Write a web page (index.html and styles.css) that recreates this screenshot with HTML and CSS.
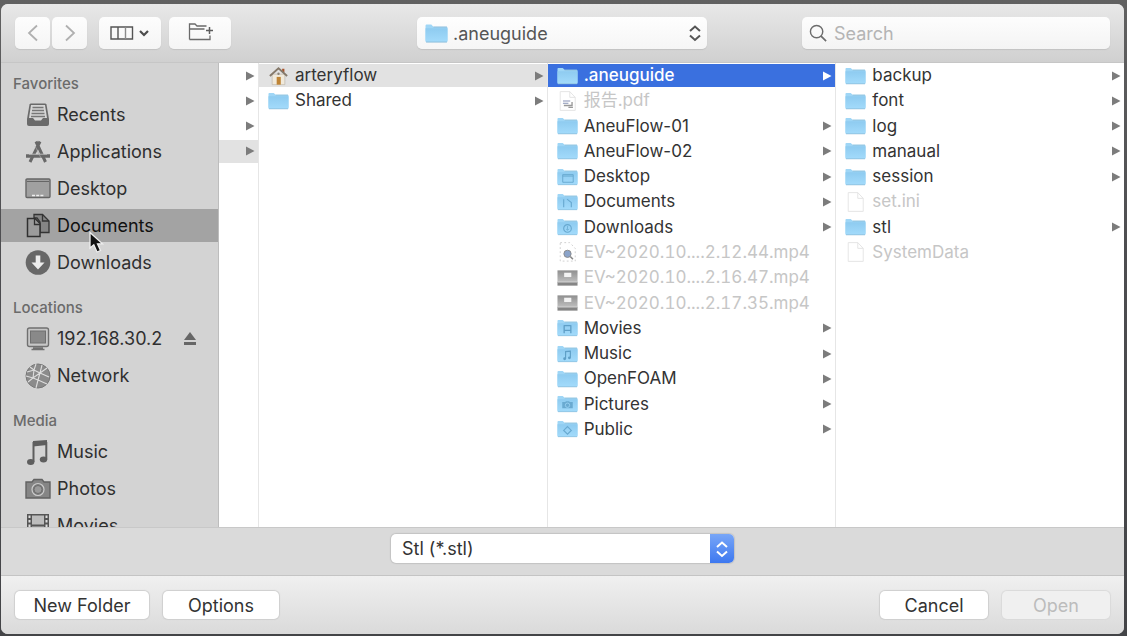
FILE: index.html
```html
<!DOCTYPE html>
<html lang="en">
<head>
<meta charset="utf-8">
<title>Open</title>
<link rel="stylesheet" href="styles.css">
</head>
<body>
<svg class="defs" aria-hidden="true">
  <defs>
    <linearGradient id="blue" x1="0" y1="0" x2="0" y2="1"><stop offset="0" stop-color="#8ecbf0"/><stop offset="1" stop-color="#a3dbfb"/></linearGradient>
    <linearGradient id="steel" x1="0" y1="0" x2="0" y2="1"><stop offset="0" stop-color="#8f8f8f"/><stop offset="1" stop-color="#bdbdbd"/></linearGradient>
    <symbol id="folder" viewBox="0 0 22 18">
      <path d="M0.500 1.500Q0.500 0.500 1.500 0.500H6L8 2.500H20.500Q21.500 2.500 21.500 3.500V16H0.500Z" fill="#9fd6f6"/>
      <path d="M0.500 4H21.500V16.500Q21.500 17.300 20.500 17.300H1.500Q0.500 17.300 0.500 16.500Z" fill="url(#blue)"/>
      <path d="M8 2.800H21M1 17.200H21" stroke="#86b5d2" stroke-width=".7"/>
    </symbol>
    <symbol id="arrow" viewBox="0 0 10 10"><path d="M1 .5L9.500 5L1 9.500Z" fill="currentColor"/></symbol>
    <symbol id="page" viewBox="0 0 22 22"><path d="M3 .7H13.500L19.500 7V21.300H3ZM13.500 .7V7H19.500" fill="#fff" stroke="#e2e2e2" stroke-width="1"/></symbol>
    <symbol id="drive" viewBox="0 0 22 18"><rect x=".5" y="1" width="21" height="12" fill="url(#steel)"/><rect x=".5" y="13" width="21" height="4" fill="#858585"/><path d="M1 13.200H21" stroke="#d5d5d5"/><rect x="7.500" y="3.500" width="7.500" height="4.500" fill="#f3f3f3"/></symbol>
    <symbol id="updown" viewBox="0 0 14 18"><path d="M2 7L7 2.500L12 7M2 11.500L7 16L12 11.500" fill="none" stroke="currentColor" stroke-width="2"/></symbol>
  </defs>
</svg>
<main class="window">
  <header class="toolbar">
    <div class="history">
      <button class="tool nav" aria-label="Back"><svg width="12" height="18" viewBox="0 0 12 18"><path d="M10 1.500L2 9L10 16.500" fill="none" stroke="#b0b0b0" stroke-width="1.800"/></svg></button>
      <button class="tool nav" aria-label="Forward"><svg width="12" height="18" viewBox="0 0 12 18"><path d="M2 1.500L10 9L2 16.500" fill="none" stroke="#b0b0b0" stroke-width="1.800"/></svg></button>
    </div>
    <button class="tool wide" aria-label="View as columns">
      <svg width="40" height="16" viewBox="0 0 40 16"><path d="M1 2H22.500V14H1ZM8 2V14" fill="none" stroke="#555" stroke-width="1.400"/><path d="M15.500 2V14" stroke="#8a8a8a" stroke-width="1.400"/><path d="M30 6L34 10L38 6" fill="none" stroke="#4c4c4c" stroke-width="2.200"/></svg>
    </button>
    <button class="tool wide" aria-label="New group">
      <svg width="26" height="20" viewBox="0 0 26 20"><path d="M2.500 16.500V1H8L10 3H19.500M2.500 6H17.500M2.500 16.500H23V12.500" fill="none" stroke="#6a6a6a" stroke-width="1.300"/><path d="M22.500 4V11M19 7.500H26" stroke="#5c5c5c" stroke-width="1.500"/></svg>
    </button>
    <div class="place">
      <svg class="place-icon" width="23" height="19"><use href="#folder"/></svg>
      <select class="place-select" aria-label="Location"><option>.aneuguide</option></select>
      <svg class="place-arrows" width="14" height="18"><use href="#updown"/></svg>
    </div>
    <div class="search">
      <svg width="19" height="19" viewBox="0 0 20 20"><circle cx="8" cy="8" r="6.500" fill="none" stroke="#6c6c6c" stroke-width="1.500"/><path d="M12.700 12.700L18 18" stroke="#6c6c6c" stroke-width="1.800"/></svg>
      <input class="search-input" type="search" placeholder="Search" aria-label="Search">
    </div>
  </header>

  <div class="browser">
    <nav class="sidebar">
      <h2 class="side-title">Favorites</h2>
      <div class="side-list">
        <a class="side-item" href="#recents"><svg width="26" height="26" viewBox="0 0 26 26"><path d="M4.500 2.500Q5 1.500 6 1.500H20Q21 1.500 21.500 2.500L24 17V22Q24 24 22 24H4Q2 24 2 22V17Z" fill="#6a6a6a"/><path d="M6 3H20L22 16H18L16 18.500H10L8 16H4Z" fill="#d6d6d6"/><path d="M7.500 5.500H18.500M7 8.500H19M6.500 11.500H19.500M6 14.500H20" stroke="#777" stroke-width="1.300"/></svg>Recents</a>
        <a class="side-item" href="#applications"><svg width="26" height="26" viewBox="0 0 26 26"><path d="M11 2.500L20.500 23M15 2.500L5 23" stroke="#686868" stroke-width="3"/><path d="M1 17H25" stroke="#686868" stroke-width="3.500"/><path d="M4 15.200H22" stroke="#ccc" stroke-width=".8"/><path d="M10 7L16 19" stroke="#aaa" stroke-width=".7"/></svg>Applications</a>
        <a class="side-item" href="#desktop"><svg width="26" height="26" viewBox="0 0 26 26"><rect x="1" y="3" width="24" height="18.500" rx="1" fill="#a0a0a0" stroke="#666" stroke-width="1.400"/><path d="M2 5.500H24" stroke="#666"/><path d="M7 19.500H19" stroke="#eee" stroke-width="1.500" stroke-dasharray="3 1.200"/></svg>Desktop</a>
        <a class="side-item selected" href="#documents"><svg width="26" height="26" viewBox="0 0 26 26"><path d="M9 1.500H17.500L24 8V19.500H15V9L12 5H9Z" fill="#858585" stroke="#343434" stroke-width="1.300"/><path d="M17.500 1.500V8H24" fill="none" stroke="#343434" stroke-width="1.300"/><path d="M2.500 5.500H10L15 10.500V23.500H2.500Z" fill="#9b9b9b" stroke="#303030" stroke-width="1.500"/><path d="M9.500 5.500V11.500H15" fill="none" stroke="#303030" stroke-width="1.300"/></svg>Documents</a>
        <a class="side-item" href="#downloads"><svg width="26" height="26" viewBox="0 0 26 26"><circle cx="13" cy="12.500" r="12.300" fill="#686868"/><path d="M10.700 5.500H15.300V12.500H19.500L13 19.500L6.500 12.500H10.700Z" fill="#ededed"/></svg>Downloads</a>
      </div>
      <h2 class="side-title">Locations</h2>
      <div class="side-list">
        <a class="side-item" href="#server"><svg width="26" height="26" viewBox="0 0 26 26"><rect x="2.500" y="2" width="21" height="18.500" rx="2" fill="#c7c7c7" stroke="#707070" stroke-width="1.400"/><rect x="5.500" y="5" width="15" height="12" fill="#898989" stroke="#707070"/><path d="M8 22H18M6.500 23.500H19.500" stroke="#707070" stroke-width="1.500"/></svg>192.168.30.2<svg class="eject" width="12" height="14" viewBox="0 0 12 14"><path d="M6 0L12 8H0Z" fill="#666"/><path d="M0 11.500H12" stroke="#666" stroke-width="3"/></svg></a>
        <a class="side-item" href="#network"><svg width="26" height="26" viewBox="0 0 26 26"><circle cx="13" cy="13" r="12" fill="#8b8b8b" stroke="#777"/><path d="M2 9L9 7L15 10L22 5M5 4L9 7L8 15L3 19M15 10L13 17L22 21M15 10L24 14M8 15L13 17L11 25M11 1L9 7M17 2L15 10M1 13L8 15L15 10" fill="none" stroke="#dedede" stroke-width="1.100"/></svg>Network</a>
      </div>
      <h2 class="side-title">Media</h2>
      <div class="side-list">
        <a class="side-item" href="#music"><svg width="26" height="26" viewBox="0 0 26 26"><path d="M8 2L22 1V6L8 7.500Z" fill="#5e5e5e"/><path d="M8.500 3V23M21.300 3V20.500" stroke="#5e5e5e" stroke-width="2"/><ellipse cx="5.700" cy="23" rx="3.700" ry="2.900" fill="#5e5e5e"/><ellipse cx="18.500" cy="20.500" rx="3.700" ry="2.900" fill="#5e5e5e"/></svg>Music</a>
        <a class="side-item" href="#photos"><svg width="26" height="26" viewBox="0 0 26 26"><path d="M1 6H7L9 3.500H17L19 6H25V22H1Z" fill="#858585" stroke="#626262" stroke-width="1.400"/><circle cx="13" cy="13.500" r="6" fill="#7a7a7a" stroke="#ccc" stroke-width="1.200"/><circle cx="13" cy="13.500" r="4" fill="#999" stroke="#666" stroke-width=".8"/></svg>Photos</a>
        <a class="side-item" href="#movies"><svg width="26" height="26" viewBox="0 0 26 26"><rect x="2" y="1" width="22" height="23" fill="#555"/><rect x="7" y="2.500" width="12" height="9" fill="#bcbcbc"/><rect x="7" y="13.500" width="12" height="9" fill="#bcbcbc"/><path d="M4.500 2.500V23M21.500 2.500V23" stroke="#ddd" stroke-width="2" stroke-dasharray="2.500 2"/></svg>Movies</a>
      </div>
    </nav>

    <ul class="column narrow">
      <li><button class="row" aria-label="Folder 1"><svg class="arrow"><use href="#arrow"/></svg></button></li>
      <li><button class="row" aria-label="Folder 2"><svg class="arrow"><use href="#arrow"/></svg></button></li>
      <li><button class="row" aria-label="Folder 3"><svg class="arrow"><use href="#arrow"/></svg></button></li>
      <li><button class="row open" aria-label="Folder 4"><svg class="arrow"><use href="#arrow"/></svg></button></li>
    </ul>
    <ul class="column">
      <li><button class="row open"><svg class="icon" viewBox="0 0 22 22"><path d="M4 9H18V20.500H4Z" fill="#f1eadb" stroke="#b9b2a6" stroke-width=".7"/><path d="M15 3H17.500V7H15Z" fill="#a7542c"/><path d="M1.500 11L11 2.500L20.500 11" fill="none" stroke="#85796a" stroke-width="2"/><rect x="9" y="12" width="4.500" height="8.500" fill="#bf8435"/><circle cx="11" cy="8.500" r="1.300" fill="#8b8377"/></svg>arteryflow<svg class="arrow"><use href="#arrow"/></svg></button></li>
      <li><button class="row"><svg class="icon"><use href="#folder"/></svg>Shared<svg class="arrow"><use href="#arrow"/></svg></button></li>
    </ul>
    <ul class="column">
      <li><button class="row active"><svg class="icon"><use href="#folder"/></svg>.aneuguide<svg class="arrow"><use href="#arrow"/></svg></button></li>
      <li><button class="row" disabled><svg class="icon" viewBox="0 0 22 22"><use href="#page"/><path d="M6 11H14M6 13.500H12" stroke="#8792b5" stroke-width="1.300"/><path d="M7 16H16V12M12 18H17" fill="none" stroke="#999" stroke-width="1.500"/></svg>报告.pdf</button></li>
      <li><button class="row"><svg class="icon"><use href="#folder"/></svg>AneuFlow-01<svg class="arrow"><use href="#arrow"/></svg></button></li>
      <li><button class="row"><svg class="icon"><use href="#folder"/></svg>AneuFlow-02<svg class="arrow"><use href="#arrow"/></svg></button></li>
      <li><button class="row"><svg class="icon" viewBox="0 0 22 18"><use href="#folder"/><path d="M6 6.500H17V14.500H6ZM6 8H17" fill="none" stroke="#68a9d0"/></svg>Desktop<svg class="arrow"><use href="#arrow"/></svg></button></li>
      <li><button class="row"><svg class="icon" viewBox="0 0 22 18"><use href="#folder"/><path d="M7 6V14.500M10.500 6L15 9.500V14.500" fill="none" stroke="#68a9d0" stroke-width="1.200"/></svg>Documents<svg class="arrow"><use href="#arrow"/></svg></button></li>
      <li><button class="row"><svg class="icon" viewBox="0 0 22 18"><use href="#folder"/><circle cx="11" cy="10.500" r="4" fill="none" stroke="#68a9d0" stroke-width="1.200"/><path d="M11 8V12M9.500 11L11 12.500L12.500 11" fill="none" stroke="#68a9d0" stroke-width=".8"/></svg>Downloads<svg class="arrow"><use href="#arrow"/></svg></button></li>
      <li><button class="row dated" disabled><svg class="icon" viewBox="0 0 22 22"><path d="M3 .7H13.500L19.500 7V21H3Z" fill="#fff" stroke="#ccc" stroke-dasharray="2 2.500"/><circle cx="11" cy="13" r="4" fill="#8ba4ca" stroke="#888"/><path d="M14 16L17 19" stroke="#888" stroke-width="1.800"/></svg>EV~2020.10....2.12.44.mp4</button></li>
      <li><button class="row dated" disabled><svg class="icon"><use href="#drive"/></svg>EV~2020.10....2.16.47.mp4</button></li>
      <li><button class="row dated" disabled><svg class="icon"><use href="#drive"/></svg>EV~2020.10....2.17.35.mp4</button></li>
      <li><button class="row"><svg class="icon" viewBox="0 0 22 18"><use href="#folder"/><path d="M7.500 6V14.500M14.500 6V14.500M7.500 6.500H14.500M7.500 11.500H14.500" fill="none" stroke="#5f9fc7" stroke-width="1.400"/></svg>Movies<svg class="arrow"><use href="#arrow"/></svg></button></li>
      <li><button class="row"><svg class="icon" viewBox="0 0 22 18"><use href="#folder"/><path d="M9 14V6.500L14 6V13" fill="none" stroke="#5f9fc7" stroke-width="1.200"/><circle cx="8" cy="14" r="1.500" fill="#5f9fc7"/><circle cx="13" cy="13" r="1.500" fill="#5f9fc7"/></svg>Music<svg class="arrow"><use href="#arrow"/></svg></button></li>
      <li><button class="row"><svg class="icon"><use href="#folder"/></svg>OpenFOAM<svg class="arrow"><use href="#arrow"/></svg></button></li>
      <li><button class="row"><svg class="icon" viewBox="0 0 22 18"><use href="#folder"/><path d="M5.500 7H8.500L9.500 6H12.500L13.500 7H16.500V13.500H5.500Z" fill="#6aaad1"/><circle cx="11" cy="10.300" r="2.300" fill="none" stroke="#9ad2f3" stroke-width=".9"/></svg>Pictures<svg class="arrow"><use href="#arrow"/></svg></button></li>
      <li><button class="row"><svg class="icon" viewBox="0 0 22 18"><use href="#folder"/><path d="M11 6.500L15 10.500L11 14.500L7 10.500Z" fill="none" stroke="#68a9d0" stroke-width="1.200"/></svg>Public<svg class="arrow"><use href="#arrow"/></svg></button></li>
    </ul>
    <ul class="column">
      <li><button class="row"><svg class="icon"><use href="#folder"/></svg>backup<svg class="arrow"><use href="#arrow"/></svg></button></li>
      <li><button class="row"><svg class="icon"><use href="#folder"/></svg>font<svg class="arrow"><use href="#arrow"/></svg></button></li>
      <li><button class="row"><svg class="icon"><use href="#folder"/></svg>log<svg class="arrow"><use href="#arrow"/></svg></button></li>
      <li><button class="row"><svg class="icon"><use href="#folder"/></svg>manaual<svg class="arrow"><use href="#arrow"/></svg></button></li>
      <li><button class="row"><svg class="icon"><use href="#folder"/></svg>session<svg class="arrow"><use href="#arrow"/></svg></button></li>
      <li><button class="row" disabled><svg class="icon"><use href="#page"/></svg>set.ini</button></li>
      <li><button class="row"><svg class="icon"><use href="#folder"/></svg>stl<svg class="arrow"><use href="#arrow"/></svg></button></li>
      <li><button class="row" disabled><svg class="icon"><use href="#page"/></svg>SystemData</button></li>
    </ul>
  </div>

  <div class="filter">
    <div class="filter-box">
      <select class="filter-select" aria-label="File type"><option>Stl (*.stl)</option></select>
      <span class="filter-cap"><svg width="14" height="18"><use href="#updown"/></svg></span>
    </div>
  </div>

  <footer class="actions">
    <button class="action new-folder">New Folder</button>
    <button class="action options">Options</button>
    <button class="action cancel">Cancel</button>
    <button class="action" disabled>Open</button>
  </footer>
</main>
<svg class="pointer" width="17" height="23" viewBox="0 0 17 23" aria-hidden="true"><path d="M2 1.500V17L5.800 13.800L9 21L12.500 19.500L9.500 12.800H14.500Z" fill="#111" stroke="#eee" stroke-width="1.300"/></svg>
</body>
</html>
```

FILE: styles.css
```css
* { box-sizing: border-box; }
body {
  margin: 0;
  height: 100vh;
  padding: 4px 3px 2px 1px;
  background: linear-gradient(#616161, #4d4d50 40%, #434447);
  font-family: Inter, "Noto Sans CJK SC", sans-serif;
  color: #333;
}
button, input, select { font: inherit; color: inherit; border: 0; margin: 0; }
.defs { position: absolute; width: 0; height: 0; }
svg { flex: none; }
.window {
  height: 100%;
  display: flex;
  flex-direction: column;
  border-radius: 7px;
  overflow: hidden;
  background: #dadada;
}

.toolbar {
  flex: none;
  height: 59px;
  padding: 0 14px;
  display: flex;
  align-items: center;
  background: linear-gradient(#e8e8e8, #d0d0d0);
  border-bottom: 1px solid #c6c6c6;
}
.history { display: flex; gap: 2px; margin-right: 12px; }
.tool {
  height: 32px;
  padding: 0;
  display: flex;
  align-items: center;
  justify-content: center;
  border-radius: 5px;
  background: linear-gradient(#fdfdfd, #f5f5f5);
  box-shadow: 0 1px 1px #c2c2c2;
}
.nav { width: 35px; }
.wide { width: 62px; margin-right: 8px; }
.place {
  flex: 0 1 290px;
  height: 32px;
  margin: 0 auto 0 178px;
  display: grid;
  grid-template-columns: 8px 24px 1fr 14px 5px;
  align-items: center;
  border-radius: 5px;
  background: linear-gradient(#fefefe, #f6f6f6);
  box-shadow: 0 1px 1px #c2c2c2;
  color: #555;
}
.place-icon { grid-area: 1 / 2; }
.place-arrows { grid-area: 1 / 4; pointer-events: none; }
.place-select {
  grid-area: 1 / 1 / 2 / -1;
  height: 32px;
  padding: 0 36px;
  appearance: none;
  background: transparent;
  font-size: 18px;
}
.search {
  flex: 0 1 308px;
  min-width: 0;
  height: 32px;
  padding: 0 7px;
  display: flex;
  align-items: center;
  gap: 6px;
  border-radius: 5px;
  background: linear-gradient(#fdfdfd, #f4f4f4);
  box-shadow: 0 1px 1px #c2c2c2;
}
.search-input {
  flex: 1;
  width: 0;
  min-width: 0;
  padding: 0;
  background: transparent;
  font-size: 18px;
}
.search-input::placeholder { color: #b4b4b4; }

.browser { flex: 1; min-height: 0; display: flex; background: #fff; }
.sidebar {
  flex: none;
  width: 218px;
  overflow: hidden;
  background: #d3d3d3;
  border-right: 1px solid #bdbdbd;
}
.side-title {
  margin: 19px 0 4px;
  padding-left: 12px;
  font-size: 15px;
  line-height: 20px;
  font-weight: 500;
  color: #6b6b6b;
}
.side-title:first-child { margin-top: 11px; }
.side-list { display: flex; flex-direction: column; gap: 4px; }
.side-item {
  height: 33px;
  padding-left: 24px;
  display: flex;
  align-items: center;
  gap: 6px;
  font-size: 18px;
  color: #2f2f2f;
  text-decoration: none;
}
.selected { background: #a3a3a3; color: #111; }
.eject { margin-left: 16px; }

.column {
  flex: 1 1 0;
  min-width: 0;
  margin: 0;
  padding: 1px 0 8px;
  list-style: none;
  display: grid;
  grid-template-rows: repeat(18, 1fr);
  border-right: 1px solid #e6e6e6;
}
.column:last-child { border-right: 0; }
.narrow { flex: 0 0 40px; }
.row {
  width: 100%;
  height: 23px;
  padding: 0 3px 0 9px;
  display: flex;
  align-items: center;
  gap: 6px;
  background: transparent;
  font-size: 17px;
  line-height: 23px;
  white-space: nowrap;
}
.row:disabled { color: #c6c6c6; }
.dated { font-variant-numeric: tabular-nums; }
.icon { width: 21px; height: 20px; }
.arrow { width: 10px; height: 10px; margin-left: auto; color: #7c7c7c; }
.open { background: #e2e2e2; }
.active { background: #3a70df; color: #fff; font-weight: 500; }
.active .arrow { color: #fff; }

.filter {
  flex: none;
  height: 49px;
  padding-top: 6px;
  display: flex;
  justify-content: center;
  align-items: flex-start;
  border-top: 1px solid #c8c8c8;
  border-bottom: 1px solid #c4c4c4;
}
.filter-box {
  width: 343px;
  height: 29px;
  display: grid;
  grid-template-columns: 1fr 24px;
  border-radius: 5px;
  background: #fff;
  box-shadow: 0 0 1px 1px #c3c3c3;
  overflow: hidden;
}
.filter-select {
  grid-area: 1 / 1 / 2 / -1;
  padding: 0 11px;
  appearance: none;
  background: transparent;
  font-size: 18px;
}
.filter-cap {
  grid-area: 1 / 2;
  display: flex;
  align-items: center;
  justify-content: center;
  background: linear-gradient(#78a6f7, #3d78f0);
  color: #fff;
  pointer-events: none;
}
.actions {
  flex: none;
  height: 58px;
  padding: 0 14px;
  display: flex;
  align-items: center;
  gap: 14px;
  background: linear-gradient(#f0f0f0, #dadada);
}
.action {
  width: 108px;
  height: 28px;
  padding: 0;
  border-radius: 5px;
  background: #fff;
  box-shadow: 0 0 1px 1px #cfcfcf;
  font-size: 18px;
}
.new-folder { width: 134px; }
.options { width: 116px; }
.cancel { margin-left: auto; }
.action:disabled { background: #f0f0f0; color: #bcbcbc; box-shadow: 0 0 1px 1px #dadada; }

.pointer { position: absolute; left: 88px; top: 231px; }
```
